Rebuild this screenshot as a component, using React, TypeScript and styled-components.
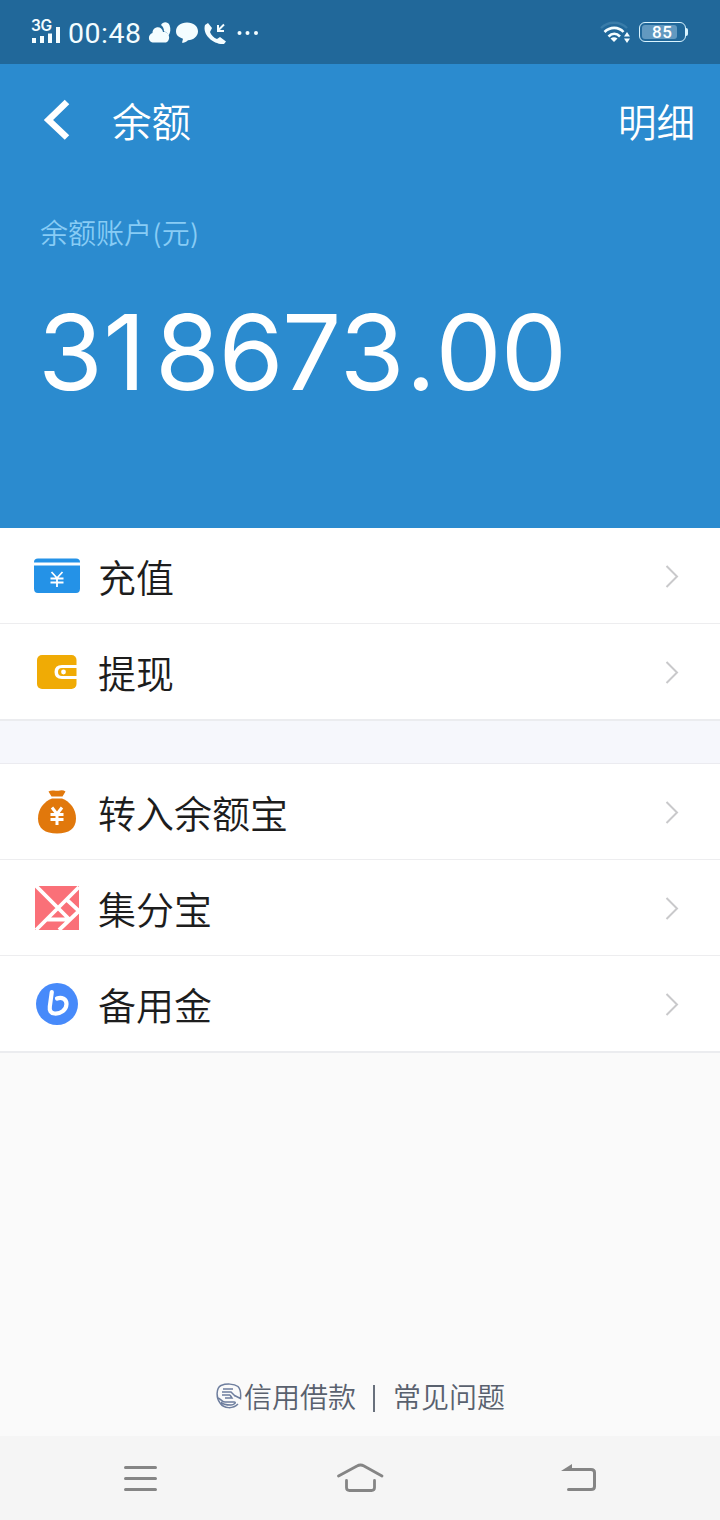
import React from "react";
import styled, { createGlobalStyle } from "styled-components";

const GlobalStyle = createGlobalStyle`
  * { box-sizing: border-box; }
  body {
    margin: 0;
    background: #fafafa;
    font-family: Inter, "Noto Sans CJK SC", sans-serif;
    font-weight: 350;
  }
  svg { display: block; flex: none; }
`;

const Screen = styled.div`
  display: flex;
  flex-direction: column;
  width: 720px;
  height: 1520px;
  overflow: hidden;
  background: #fafafa;
`;

const StatusBar = styled.header`
  display: flex;
  align-items: center;
  height: 64px;
  padding: 0 32px 0 31px;
  background: #21689a;
  color: #f4fdff;
`;

const Signal = styled.div`
  width: 30px;
  height: 28px;
  position: relative;
`;

const Network = styled.span`
  position: absolute;
  left: 0;
  top: 0;
  font-size: 15.5px;
  line-height: 16px;
  font-weight: 600;
  letter-spacing: -0.3px;
`;

const Bars = styled.svg`
  position: absolute;
  left: 0;
  bottom: 3px;
`;

const Clock = styled.time`
  width: 74px;
  margin: 4px 0 0 7px;
  font-family: Roboto, sans-serif;
  font-size: 28.5px;
  font-weight: 400;
  line-height: 32px;
  letter-spacing: 0.5px;
  white-space: nowrap;
`;

const StatusIcons = styled.div`
  display: flex;
  margin: 1px 0 0 6px;
`;

const StatusRight = styled.div`
  display: flex;
  align-items: center;
  gap: 7px;
  margin-left: auto;
`;

const Battery = styled.div`
  display: flex;
  align-items: center;
`;

const BatteryBody = styled.div`
  width: 47px;
  height: 20px;
  padding: 2px;
  border: 1.5px solid #d9f4ff;
  border-radius: 6px;
`;

const BatteryFill = styled.div`
  width: 35px;
  height: 100%;
  border-radius: 3px;
  background: #6299c0;
  color: #fff;
  font-family: Roboto, sans-serif;
  font-size: 17px;
  font-weight: 500;
  line-height: 15px;
  letter-spacing: 0.5px;
  padding-left: 10px;
`;

const BatteryTip = styled.div`
  width: 2px;
  height: 8px;
  background: #d9f4ff;
  border-radius: 0 2px 2px 0;
`;

const Hero = styled.section`
  height: 464px;
  background: #2b8bcf;
  color: #fff;
`;

const TitleBar = styled.div`
  display: flex;
  align-items: center;
  height: 112px;
  padding: 0 25px 0 43px;
`;

const Title = styled.h1`
  margin: 5px 0 0 42px;
  font-size: 39.5px;
  font-weight: inherit;
  line-height: 56px;
`;

const Detail = styled.a`
  margin: 6px 0 0 auto;
  font-size: 38.5px;
  line-height: 56px;
`;

const AccountLabel = styled.div`
  margin: 38px 0 0 40px;
  font-size: 28px;
  line-height: 40px;
  color: #88ccf5;
`;

const Amount = styled.div`
  margin: 32px 0 0 38px;
  font-size: 105px;
  font-weight: 400;
  line-height: 132px;
  white-space: nowrap;
`;

const Digit = styled.span<{ $gap: number }>`
  letter-spacing: ${(p) => p.$gap}px;
`;

const Group = styled.div`
  background: #fff;
`;

const Gap = styled.div`
  height: 43px;
  background: #f6f7fc;
  border-bottom: 1px solid #ebebf0;
`;

const Row = styled.div<{ $last?: boolean }>`
  display: flex;
  align-items: center;
  height: ${(p) => (p.$last ? 97 : 96)}px;
  padding: 1px 40px 0 33px;
  border-bottom: ${(p) => (p.$last ? "2px solid #ebecef" : "1px solid #ededef")};
`;

const RowLabel = styled.span`
  flex: 1;
  margin: 3px 0 0 17px;
  font-size: 38px;
  line-height: 56px;
  color: #1d1d1d;
`;

const Footer = styled.footer`
  display: flex;
  align-items: center;
  height: 40px;
  margin-top: 323px;
  padding-left: 216px;
  font-size: 28px;
  line-height: 40px;
  color: #59616e;
`;

const FooterLink = styled.a`
  margin: 3px 0 0 2px;
`;

const Divider = styled.span`
  width: 2px;
  height: 27px;
  margin: 4px 16px 0 17px;
  background: #68707c;
`;

const NavBar = styled.nav`
  display: flex;
  justify-content: space-between;
  align-items: center;
  height: 84px;
  margin-top: auto;
  padding: 0 120px;
  background: #f5f5f5;
`;

const Chevron = () => (
  <svg width="16" height="26" viewBox="0 0 16 26" fill="none" stroke="#c9c9cb" strokeWidth="2">
    <path d="M2.500 3L13 13.500 2.500 24" />
  </svg>
);

const CardIcon = () => (
  <svg width="48" height="48" viewBox="0 0 48 48">
    <path fill="#2492e7" d="M1 10.500V10q0-3.500 4-3.500h38q4 0 4 3.500v.5zM1 13.500h46v23q0 4.500-4 4.500H5q-4 0-4-4.500z" />
    <path fill="none" stroke="#fff" strokeWidth="1.800" d="M18.500 20l5.500 6 5.500-6M17.500 26.500h13M17.500 30.500h13M24 26v9" />
  </svg>
);

const WalletIcon = () => (
  <svg width="48" height="48" viewBox="0 0 48 48">
    <rect x="4" y="7" width="39.500" height="34" rx="5" fill="#f0ab05" />
    <path fill="#fff" d="M46 17H29q-7.500 0-7.500 7t7.500 7h17v-3H29q-4 0-4-4t4-4h17z" />
    <circle cx="30.500" cy="24" r="2.400" fill="#fff" />
  </svg>
);

const BagIcon = () => (
  <svg width="48" height="48" viewBox="0 0 48 48" fill="#e1780c">
    <path d="M15.500 3.500Q18 2 21 2.500q3 .7 6 0 3-.7 5.500 1L29.500 8.500h-11z" />
    <path d="M19 10.500h10C37 13.500 43 21 43 30.500c0 10-7 15-19 15S5 40.500 5 30.500c0-9.500 6-17 14-20z" />
    <path fill="none" stroke="#fff" strokeWidth="3" d="M19 19.500l5 6.500 5-6.500M17.500 26.500h13M17.500 31.500h13M24 26v11" />
  </svg>
);

const PointsIcon = () => (
  <svg width="48" height="48" viewBox="0 0 48 48">
    <rect x="2" y="2" width="44" height="44" fill="#fa7078" />
    <path
      fill="none"
      stroke="#fff"
      strokeWidth="3.800"
      d="M2 1l34 34M46 3L3 46M33 15l13 12-20 19M14 35.500h20"
    />
  </svg>
);

const ReserveIcon = () => (
  <svg width="48" height="48" viewBox="0 0 48 48">
    <circle cx="24" cy="24" r="21" fill="#478afa" />
    <path
      fill="none"
      stroke="#fff"
      strokeWidth="4.200"
      strokeLinecap="round"
      strokeLinejoin="round"
      d="M18.800 12l-2 14.500q-.8 6.500 4.700 7c6.500.5 11.800-3.500 12-9.500.1-5-5-7.500-9.500-5.500"
    />
  </svg>
);

const LoanIcon = () => (
  <svg width="26" height="26" viewBox="0 0 26 26" fill="none" stroke="#6e7e9e" strokeWidth="1.500">
    <path d="M4 20C0 15 0 5 5 2.500c5-2 13-2 17 1 3 3 3 7 2.500 12l-6-3" />
    <path d="M7 6h10M6 9h9l4 4M6 12h8M9 15h7l-2-3M2 15c3 1 5 5 8 4h8c3 0 0 3-3 3-4 0-8 0-10-3M4 20c4 6 13 6 18 1" />
  </svg>
);

type RowProps = { icon: React.ReactNode; label: string; last?: boolean };

const MenuRow = ({ icon, label, last }: RowProps) => (
  <Row $last={last}>
    {icon}
    <RowLabel>{label}</RowLabel>
    <Chevron />
  </Row>
);

export default function App() {
  return (
    <Screen>
      <GlobalStyle />
      <StatusBar>
        <Signal>
          <Network>3G</Network>
          <Bars width="30" height="17" viewBox="0 0 30 17" fill="#f4fdff">
            <path d="M1 12h4v5H1zM9 10h4v7H9zM17 7.500h4V17h-4zM25 1h4v16h-4z" />
          </Bars>
        </Signal>
        <Clock>00:48</Clock>
        <StatusIcons>
          <svg width="112" height="24" viewBox="0 0 112 24" fill="#f4fdff">
            <path d="M13 4c2-4 7-3.500 8.500 0 1.500 4 1 8-1 10.500-1-3-3-4-4.500-4 0-3-1-5-3-6.500z" />
            <path d="M6 21.500c-6.500 0-6.500-8-1.500-9.500 0-7 9.500-8 10.500-1 7-1 8 8.500 3 10.500z" />
            <path d="M39 1.500c6.500 0 11 3.500 11 8.800S45.500 19 40 19.200c-2 2-4 2.500-6 2.500l1-4c-5-1.500-7-4-7-7.400C28 5 32.500 1.500 39 1.500z" />
            <path d="M60 2l4 5-2 4c1 3 4 6 7 7l3-2 6 4.500L76 23c-10 1-22-9-19-19z" />
            <path d="M76 3.500l-6 6M70 4v6h6" fill="none" stroke="#f4fdff" strokeWidth="2" />
            <circle cx="91.500" cy="12" r="2" />
            <circle cx="99.500" cy="12" r="2" />
            <circle cx="108" cy="12" r="2" />
          </svg>
        </StatusIcons>
        <StatusRight>
          <svg width="32" height="24" viewBox="0 0 32 24" fill="none">
            <path d="M1 8C8 1 20 1 27 8" stroke="#397ca9" strokeWidth="2.400" />
            <path d="M4.500 12c5.500-5.500 14-5.500 19 0M8.500 16.500c3.500-3.500 8-3.500 11.500 0" stroke="#f4fdff" strokeWidth="2.600" />
            <path d="M10.500 18.500q3.500-2.500 7 0L14 22z" fill="#f4fdff" />
            <path d="M27 12l3 4.500h-6zM27 23l3-4.500h-6z" fill="#f4fdff" />
          </svg>
          <Battery>
            <BatteryBody>
              <BatteryFill>85</BatteryFill>
            </BatteryBody>
            <BatteryTip />
          </Battery>
        </StatusRight>
      </StatusBar>
      <Hero>
        <TitleBar>
          <svg width="27" height="42" viewBox="0 0 27 42" fill="none" stroke="#fff" strokeWidth="6.500">
            <path d="M24 3L5.500 21 24 38.500" />
          </svg>
          <Title>余额</Title>
          <Detail>明细</Detail>
        </TitleBar>
        <AccountLabel>余额账户(元)</AccountLabel>
        <Amount>
          <Digit $gap={0.5}>3</Digit>
          <Digit $gap={9}>1</Digit>
          <Digit $gap={-1.6}>867</Digit>
          <Digit $gap={1}>3</Digit>
          <Digit $gap={-0.5}>.</Digit>
          <Digit $gap={-1}>00</Digit>
        </Amount>
      </Hero>
      <Group>
        <MenuRow icon={<CardIcon />} label="充值" />
        <MenuRow icon={<WalletIcon />} label="提现" last />
      </Group>
      <Gap />
      <Group>
        <MenuRow icon={<BagIcon />} label="转入余额宝" />
        <MenuRow icon={<PointsIcon />} label="集分宝" />
        <MenuRow icon={<ReserveIcon />} label="备用金" last />
      </Group>
      <Footer>
        <LoanIcon />
        <FooterLink>信用借款</FooterLink>
        <Divider />
        <FooterLink>常见问题</FooterLink>
      </Footer>
      <NavBar>
        <svg width="40" height="34" viewBox="0 0 40 34" stroke="#858585" strokeWidth="3" strokeLinecap="round">
          <path d="M5.500 6.500h30M5.500 17.500h30M5.500 28.500h30" />
        </svg>
        <svg width="50" height="34" viewBox="0 0 50 34" fill="none" stroke="#858585" strokeWidth="2.800" strokeLinecap="round">
          <path d="M3.500 15L22 5q3.500-2 7 0l18 10M11.500 19.500v7q0 3 3 3h22q3 0 3-3v-7" />
        </svg>
        <svg width="40" height="34" viewBox="0 0 40 34" fill="none" stroke="#858585" strokeWidth="3" strokeLinecap="round">
          <path d="M10 8.500h21q3.500 0 3.500 3v14q0 3-3.500 3H8.500" />
          <path d="M1 10l11-7v7z" fill="#858585" stroke="none" />
        </svg>
      </NavBar>
    </Screen>
  );
}
